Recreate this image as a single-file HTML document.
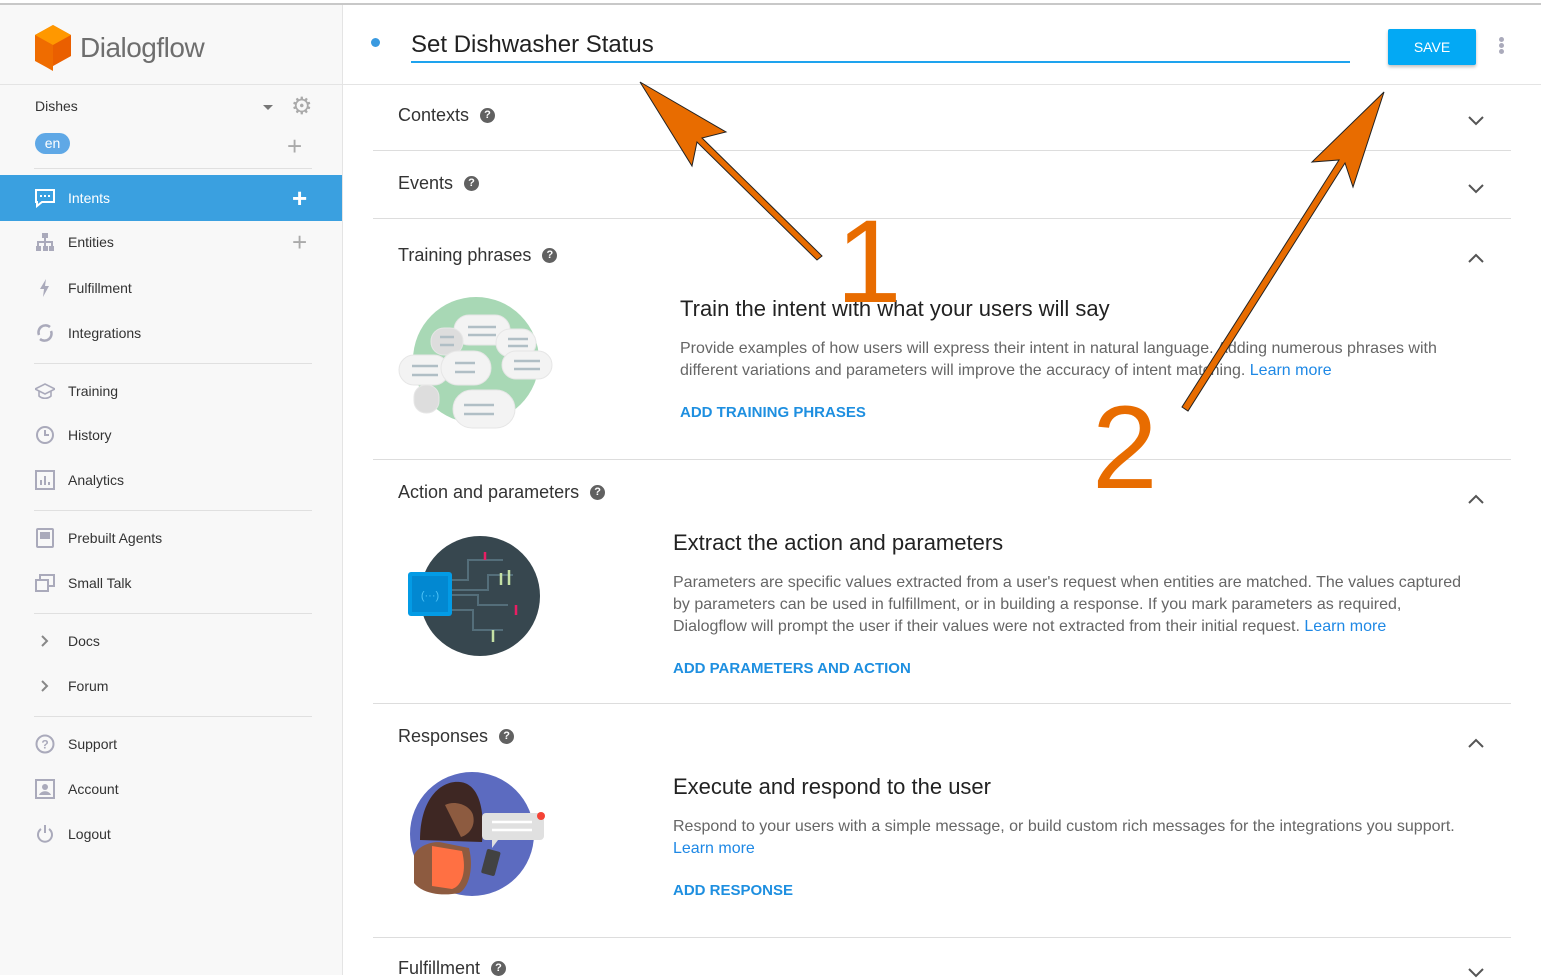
<!DOCTYPE html>
<html><head><meta charset="utf-8"><style>
*{box-sizing:border-box;margin:0;padding:0}
body{width:1541px;height:975px;overflow:hidden;background:#fff;font-family:"Liberation Sans",Arial,sans-serif;color:#202124;position:relative}
.top{position:absolute;left:0;top:3px;width:1541px;height:2px;background:#c8c8c8}
.side{position:absolute;left:0;top:5px;width:343px;height:970px;background:#f8f8f8;border-right:1px solid #e4e4e4}
.logo{position:absolute;left:34px;top:22px;display:flex;align-items:center}
.logo span{font-size:28px;color:#6e6e6e;margin-left:8px;letter-spacing:-0.5px}
.sep{position:absolute;left:34px;width:278px;height:1px;background:#e0e0e0}
.item{position:absolute;left:0;width:342px;height:46px;display:flex;align-items:center;font-size:14px;color:#333}
.item .ic{position:absolute;left:35px;width:20px;height:20px}
.item .t{position:absolute;left:68px}
.plus{position:absolute;color:#aaa;font-size:26px;font-weight:300}
.main .row{position:absolute;left:373px;width:1138px;border-bottom:1px solid #ddd}
.h{position:absolute;left:398px;font-size:18px;color:#333;display:flex;align-items:center}
.q{display:inline-block;width:15px;height:15px;border-radius:50%;background:#616161;color:#fff;font-size:11px;font-weight:bold;text-align:center;line-height:15px;margin-left:11px}
.chev{position:absolute;left:1468px;width:16px;height:10px}
.big{position:absolute;font-size:22px;color:#222}
.p{position:absolute;font-size:16px;line-height:22px;color:#666}
.p a{color:#1e88e5;text-decoration:none}
.lnk{position:absolute;font-size:15px;font-weight:bold;color:#1e8fe0}
</style></head><body>
<div class="top"></div>
<div class="side">
 <div class="logo" style="top:20px">
  <svg width="38" height="46" viewBox="0 0 38 46"><polygon points="19,0 37,10 37,31 19,41 19,46 12,42 1,36 1,10" fill="#ef6c00"/><polygon points="19,0 37,10 19,20 1,10" fill="#ff9800"/><polygon points="19,20 37,10 37,31 19,41" fill="#e65100" opacity=".5"/></svg>
  <span>Dialogflow</span>
 </div>
 <div style="position:absolute;left:0;top:79px;width:342px;height:1px;background:#e4e4e4"></div>
 <div style="position:absolute;left:35px;top:93px;font-size:14px;color:#333">Dishes</div>
 <div style="position:absolute;left:263px;top:100px;width:0;height:0;border-left:5px solid transparent;border-right:5px solid transparent;border-top:5px solid #777"></div>
 <div style="position:absolute;left:291px;top:90px;font-size:24px;color:#aaa;line-height:24px">⚙</div>
 <div style="position:absolute;left:35px;top:128px;width:35px;height:21px;border-radius:11px;background:#5fa8e6;color:#fff;font-size:14px;text-align:center;line-height:21px">en</div>
 <div class="plus" style="left:287px;top:126px">+</div>
 <div class="sep" style="top:163px"></div>
 <div class="item" style="top:170px;background:#3aa0e0;color:#fff">
  <svg class="ic" viewBox="0 0 20 20" style="left:35px"><path d="M1 2h18v12H7l-5 4v-4H1z" fill="none" stroke="#fff" stroke-width="2"/><rect x="5" y="7" width="2" height="2" fill="#fff"/><rect x="9" y="7" width="2" height="2" fill="#fff"/><rect x="13" y="7" width="2" height="2" fill="#fff"/></svg>
  <span class="t">Intents</span><span class="plus" style="left:292px;top:8px;color:#fff;font-weight:bold">+</span></div>
 <div class="item" style="top:214px"><svg class="ic" viewBox="0 0 20 20"><rect x="7" y="1" width="6" height="5" fill="#aab"/><rect x="1" y="14" width="5" height="5" fill="#aab"/><rect x="8" y="14" width="5" height="5" fill="#aab"/><rect x="14" y="14" width="5" height="5" fill="#aab"/><path d="M10 6v8M3 14v-4h14v4" stroke="#aab" stroke-width="2" fill="none"/></svg><span class="t">Entities</span><span class="plus" style="left:292px;top:8px">+</span></div>
 <div class="item" style="top:260px"><svg class="ic" viewBox="0 0 20 20"><polygon points="11,1 5,11 9,11 8,19 14,8 10,8" fill="#aab"/></svg><span class="t">Fulfillment</span></div>
 <div class="item" style="top:305px"><svg class="ic" viewBox="0 0 20 20"><path d="M4 12a7 7 0 0 1 11-8M16 8a7 7 0 0 1-11 8" stroke="#aab" stroke-width="2.5" fill="none"/></svg><span class="t">Integrations</span></div>
 <div class="sep" style="top:358px"></div>
 <div class="item" style="top:363px"><svg class="ic" viewBox="0 0 20 20"><path d="M0 8l10-5 10 5-10 5z M4 10v5c3 3 9 3 12 0v-5" stroke="#aab" stroke-width="1.6" fill="none"/></svg><span class="t">Training</span></div>
 <div class="item" style="top:407px"><svg class="ic" viewBox="0 0 20 20"><circle cx="10" cy="10" r="8" stroke="#aab" stroke-width="2" fill="none"/><path d="M10 5v5h4" stroke="#aab" stroke-width="2" fill="none"/></svg><span class="t">History</span></div>
 <div class="item" style="top:452px"><svg class="ic" viewBox="0 0 20 20"><rect x="1" y="1" width="18" height="18" stroke="#aab" stroke-width="2" fill="none"/><path d="M6 15V10M10 15V6M14 15v-3" stroke="#aab" stroke-width="2"/></svg><span class="t">Analytics</span></div>
 <div class="sep" style="top:505px"></div>
 <div class="item" style="top:510px"><svg class="ic" viewBox="0 0 20 20"><rect x="2" y="1" width="16" height="18" rx="1" stroke="#aab" stroke-width="2" fill="none"/><rect x="5" y="4" width="10" height="7" fill="#aab"/></svg><span class="t">Prebuilt Agents</span></div>
 <div class="item" style="top:555px"><svg class="ic" viewBox="0 0 20 20"><rect x="5" y="2" width="14" height="11" stroke="#aab" stroke-width="2" fill="none"/><rect x="1" y="7" width="12" height="11" stroke="#aab" stroke-width="2" fill="#f8f8f8"/></svg><span class="t">Small Talk</span></div>
 <div class="sep" style="top:608px"></div>
 <div class="item" style="top:613px"><svg class="ic" viewBox="0 0 20 20"><path d="M7 5l5 5-5 5" stroke="#888" stroke-width="2" fill="none"/></svg><span class="t">Docs</span></div>
 <div class="item" style="top:658px"><svg class="ic" viewBox="0 0 20 20"><path d="M7 5l5 5-5 5" stroke="#888" stroke-width="2" fill="none"/></svg><span class="t">Forum</span></div>
 <div class="sep" style="top:711px"></div>
 <div class="item" style="top:716px"><svg class="ic" viewBox="0 0 20 20"><circle cx="10" cy="10" r="8.5" stroke="#aab" stroke-width="2" fill="none"/><text x="10" y="14.5" font-size="12" text-anchor="middle" fill="#aab" font-family="Liberation Sans" font-weight="bold">?</text></svg><span class="t">Support</span></div>
 <div class="item" style="top:761px"><svg class="ic" viewBox="0 0 20 20"><rect x="1" y="1" width="18" height="18" stroke="#aab" stroke-width="2" fill="none"/><circle cx="10" cy="8" r="3" fill="#aab"/><path d="M4 16c2-5 10-5 12 0z" fill="#aab"/></svg><span class="t">Account</span></div>
 <div class="item" style="top:806px"><svg class="ic" viewBox="0 0 20 20"><path d="M6 5a7 7 0 1 0 8 0" stroke="#aab" stroke-width="2" fill="none"/><path d="M10 1v8" stroke="#aab" stroke-width="2"/></svg><span class="t">Logout</span></div>
</div>

<div class="main">
 <div style="position:absolute;left:371px;top:38px;width:9px;height:9px;border-radius:50%;background:#3a9ae0"></div>
 <div style="position:absolute;left:411px;top:31px;font-size:24px;color:#222">Set Dishwasher Status</div>
 <div style="position:absolute;left:411px;top:61px;width:939px;height:2px;background:#1ea3ee"></div>
 <div style="position:absolute;left:1388px;top:29px;width:88px;height:36px;background:#03a9f4;border-radius:2px;box-shadow:0 2px 3px rgba(0,0,0,.25);color:#fff;font-size:14px;text-align:center;line-height:36px">SAVE</div>
 <div style="position:absolute;left:1499px;top:37px;width:5px">
  <div style="width:5px;height:5px;border-radius:50%;background:#aab;margin-bottom:1px"></div><div style="width:5px;height:5px;border-radius:50%;background:#aab;margin-bottom:1px"></div><div style="width:5px;height:5px;border-radius:50%;background:#aab"></div></div>
 <div style="position:absolute;left:343px;top:84px;width:1198px;height:1px;background:#e4e4e4"></div>

 <div class="h" style="top:105px">Contexts<span class="q">?</span></div>
 <svg class="chev" style="top:116px" viewBox="0 0 16 10"><path d="M1 1l7 7 7-7" stroke="#555" stroke-width="2" fill="none"/></svg>
 <div class="row" style="top:85px;height:66px"></div>
 <div class="h" style="top:173px">Events<span class="q">?</span></div>
 <svg class="chev" style="top:184px" viewBox="0 0 16 10"><path d="M1 1l7 7 7-7" stroke="#555" stroke-width="2" fill="none"/></svg>
 <div class="row" style="top:151px;height:68px"></div>

 <div class="h" style="top:245px">Training phrases<span class="q">?</span></div>
 <svg class="chev" style="top:253px" viewBox="0 0 16 10"><path d="M1 9l7-7 7 7" stroke="#555" stroke-width="2" fill="none"/></svg>
 <svg style="position:absolute;left:398px;top:295px" width="155" height="140" viewBox="0 0 155 140">
  <circle cx="78" cy="65" r="63" fill="#a8d8b5"/>
  <g fill="#f3f3f3" stroke="#e6e6e6">
   <rect x="56" y="20" width="56" height="30" rx="15"/><rect x="33" y="33" width="32" height="27" rx="13" fill="#ddd"/><rect x="98" y="34" width="40" height="28" rx="14"/><rect x="1" y="60" width="50" height="30" rx="15"/><rect x="43" y="56" width="50" height="34" rx="17"/><rect x="104" y="56" width="50" height="28" rx="14"/><rect x="16" y="90" width="25" height="28" rx="12" fill="#ddd"/><rect x="55" y="95" width="62" height="38" rx="19"/>
  </g>
  <g stroke="#b0bec5" stroke-width="2.5"><path d="M70 32h28M70 40h28M110 44h20M110 51h20M14 71h26M14 80h26M57 68h20M57 77h20M116 66h26M116 74h26M66 110h30M66 119h30M42 42h14M42 50h14"/></g>
 </svg>
 <div class="big" style="left:680px;top:296px">Train the intent with what your users will say</div>
 <div class="p" style="left:680px;top:338px;width:800px">Provide examples of how users will express their intent in natural language. Adding numerous phrases with different variations and parameters will improve the accuracy of intent matching. <a>Learn more</a></div>
 <div class="lnk" style="left:680px;top:404px">ADD TRAINING PHRASES</div>
 <div class="row" style="top:219px;height:241px"></div>

 <div class="h" style="top:482px">Action and parameters<span class="q">?</span></div>
 <svg class="chev" style="top:494px" viewBox="0 0 16 10"><path d="M1 9l7-7 7 7" stroke="#555" stroke-width="2" fill="none"/></svg>
 <svg style="position:absolute;left:403px;top:535px" width="140" height="125" viewBox="0 0 140 125">
  <circle cx="77" cy="61" r="60" fill="#37474f"/>
  <g stroke="#546e7a" stroke-width="2" fill="none"><path d="M45 45h20v-20h35M45 60h30v10h30M45 75h25v20h30M45 55h40v-15h25"/></g>
  <g stroke="#e91e63" stroke-width="2.5"><path d="M82 17v8M113 70v10"/></g>
  <g stroke="#c5e1a5" stroke-width="2.5"><path d="M98 38v12M106 35v15M90 95v12"/></g>
  <rect x="5" y="37" width="44" height="44" rx="3" fill="#039be5"/><rect x="9" y="41" width="36" height="36" fill="#0288d1"/>
  <text x="27" y="64" font-size="11" fill="#4fc3f7" text-anchor="middle" font-family="Liberation Sans">(···)</text>
 </svg>
 <div class="big" style="left:673px;top:530px">Extract the action and parameters</div>
 <div class="p" style="left:673px;top:572px;width:790px">Parameters are specific values extracted from a user's request when entities are matched. The values captured by parameters can be used in fulfillment, or in building a response. If you mark parameters as required, Dialogflow will prompt the user if their values were not extracted from their initial request. <a>Learn more</a></div>
 <div class="lnk" style="left:673px;top:660px">ADD PARAMETERS AND ACTION</div>
 <div class="row" style="top:460px;height:244px"></div>

 <div class="h" style="top:726px">Responses<span class="q">?</span></div>
 <svg class="chev" style="top:738px" viewBox="0 0 16 10"><path d="M1 9l7-7 7 7" stroke="#555" stroke-width="2" fill="none"/></svg>
 <svg style="position:absolute;left:400px;top:760px" width="160" height="150" viewBox="0 0 160 150">
  <circle cx="72" cy="74" r="62" fill="#5c6bc0"/>
  <path d="M20 80c0-40 20-60 40-58 20 2 25 30 22 60z" fill="#3e2723"/>
  <path d="M45 45c10-5 25 0 28 10 3 12-5 20-12 22z" fill="#8d5b40"/>
  <path d="M14 95c5-10 20-15 30-12l25 5c5 20 0 40-10 45-15 3-35 2-45-10z" fill="#8d5b40"/>
  <path d="M32 86l30 5c5 20 0 35-10 38l-20-3z" fill="#ff7043"/>
  <rect x="84" y="90" width="14" height="25" rx="2" transform="rotate(15 91 102)" fill="#424242"/>
  <rect x="82" y="53" width="62" height="27" rx="4" fill="#e0e0e0"/><path d="M92 80l0 8 6-8z" fill="#e0e0e0"/>
  <path d="M92 62h40M92 70h40" stroke="#fff" stroke-width="2.5"/><circle cx="141" cy="56" r="4" fill="#f44336"/>
 </svg>
 <div class="big" style="left:673px;top:774px">Execute and respond to the user</div>
 <div class="p" style="left:673px;top:816px;width:800px">Respond to your users with a simple message, or build custom rich messages for the integrations you support.<br><a>Learn more</a></div>
 <div class="lnk" style="left:673px;top:882px">ADD RESPONSE</div>
 <div class="row" style="top:704px;height:234px"></div>
 <div class="h" style="top:958px">Fulfillment<span class="q">?</span></div>
 <svg class="chev" style="top:968px" viewBox="0 0 16 10"><path d="M1 1l7 7 7-7" stroke="#555" stroke-width="2" fill="none"/></svg>
</div>

<svg style="position:absolute;left:0;top:0" width="1541" height="975" viewBox="0 0 1541 975">
 <g fill="#e86c00" stroke="#222" stroke-width="1">
  <polygon points="640,82 726,132 702,138 822,256 817,260 697,142 692,166"/>
  <polygon points="1384,92 1353,187 1345,163 1188,411 1182,407 1339,160 1312,162"/>
 </g>
 <text x="836" y="302" font-size="118" fill="#e86c00" font-family="Liberation Sans" font-weight="300">1</text>
 <text x="1092" y="488" font-size="118" fill="#e86c00" font-family="Liberation Sans" font-weight="300">2</text>
</svg>
</body></html>
